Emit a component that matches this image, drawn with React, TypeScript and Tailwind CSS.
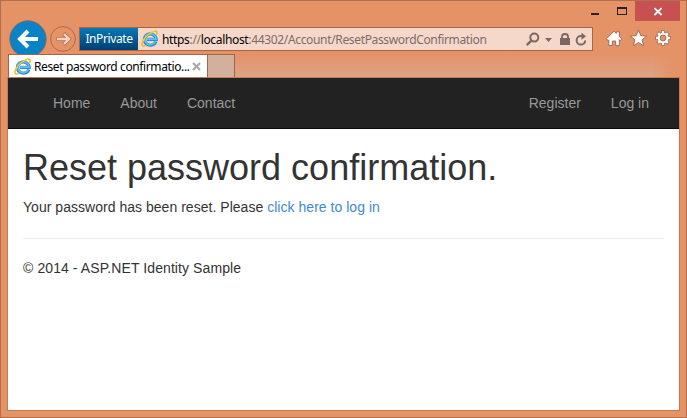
function IELogo() {
  return (
    <svg className="block shrink-0" width="18" height="18" viewBox="0 0 18 18" fill="none">
      <path d="M14.9 11.4A5.9 5.6 0 1 1 15.2 9.3H5.8" stroke="#2b8fce" strokeWidth="3.2" />
      <path d="M14.5 11.4A5.7 5.4 0 1 1 15 9.1H5.8" stroke="#62c0ee" strokeWidth="1.6" />
      <path d="M15.3 4.9C17 2 15.9 .8 13.6 1.3C9 2.2 2.6 7.8 1.2 12.6C.3 15.8 1.8 16.9 4.8 15.3" stroke="#f1b51c" strokeWidth="1.5" />
      <path d="M13.7 1.4C9.1 2.4 2.9 8 1.5 12.6" stroke="#ffd94a" strokeWidth=".7" />
    </svg>
  );
}

function TitleBar() {
  return (
    <div className="flex h-5 shrink-0 justify-end pr-[6px]">
      <svg className="block" width="49" height="20" shapeRendering="crispEdges">
        <rect x="5" y="12" width="8" height="2" fill="#252229" />
        <path d="M31 6H41V14H31ZM32 8V13H40V8Z" fill="#252229" fillRule="evenodd" />
      </svg>
      <div className="h-5 w-[45px] bg-[#c75050]">
        <svg className="block" width="45" height="20">
          <path d="M19.4 7.2L26.6 14M26.6 7.2L19.4 14" stroke="#fff" strokeWidth="1.8" />
        </svg>
      </div>
    </div>
  );
}

function NavigationRow() {
  return (
    <div className="flex h-[33px] shrink-0 pl-2">
      <svg className="-mt-px block shrink-0" width="70" height="38" viewBox="9 20 70 38" fill="none">
        <circle cx="28" cy="39" r="18.2" fill="#0883c5" stroke="#8d6858" />
        <path d="M38 39H20M28 31L20 39L28 47" stroke="#fff" strokeWidth="4" />
        <circle cx="63" cy="39" r="12.4" stroke="#b06b48" />
        <path d="M56.5 39H68M63.5 33.5L69 39L63.5 44.5" stroke="#b46f4e" strokeWidth="4" />
        <path d="M57 39H68.5M64 34L69 39L64 44" stroke="#f6d5c6" strokeWidth="2.4" />
      </svg>
      <div className="mt-[6px] flex h-6 w-[514px] shrink-0 border border-[#a46548] bg-[#f6d8cb] text-[12px] leading-[22px]">
        <div className="w-[58px] bg-linear-to-b from-[#0879b8] to-[#003f70] text-center tracking-[-0.4px] text-white">InPrivate</div>
        <div className="ml-[3px] mt-[2px] w-[18px]"><IELogo /></div>
        <div className="ml-[3px] mt-px w-[362px] whitespace-nowrap tracking-[-0.34px] text-[#7c6c65]">
          <span className="text-black">https</span>://<span className="text-black">localhost</span>:44302/Account/ResetPasswordConfirmation
        </div>
        <svg className="block shrink-0" width="66" height="22" viewBox="524 28 66 22" fill="none">
          <circle cx="534.3" cy="37.6" r="4" stroke="#7c6861" strokeWidth="2" />
          <path d="M531.3 40.7L526.8 45.2" stroke="#7c6861" strokeWidth="2.4" />
          <path d="M545 38H552L548.5 42Z" fill="#7c6861" />
          <path d="M560 38H570V45H560Z" fill="#7c6861" />
          <path d="M562 38.5V36.5Q562 34 565 34T568 36.5V38.5" stroke="#7c6861" strokeWidth="1.8" />
          <path d="M583 36H581A4.3 4.3 0 1 0 585.2 40.5" stroke="#7c6861" strokeWidth="2" />
          <path d="M581.5 32.7L586 36.2L581.5 39.7Z" fill="#7c6861" />
        </svg>
      </div>
      <svg className="mt-[6px] block shrink-0" width="84" height="24" viewBox="593 27 84 24">
        <path d="M606.6 38.7L614 31.2L616.3 33.4V31.8H619.4V36.5L621.8 39L620.2 40.7L619.3 39.8V45.6H615.7V41H612.4V45.6H608.8V39.8L608 40.6Z" fill="#fff" stroke="#94664f" strokeWidth=".9" />
        <path d="M638.5 30.2L640.8 35.7L646.7 36.1L642.1 39.8L643.6 45.7L638.5 42.5L633.4 45.7L634.9 39.8L630.3 36.1L636.2 35.7Z" fill="#fff" stroke="#94664f" strokeWidth=".9" />
        <path d="M663 30.4V45.6M655.4 38H670.6M657.6 32.6L668.4 43.4M657.6 43.4L668.4 32.6" stroke="#94664f" strokeWidth="3.8" />
        <circle cx="663" cy="38" r="5.9" fill="#94664f" />
        <path d="M663 31V45M656 38H670M658.1 33.1L667.9 42.9M658.1 42.9L667.9 33.1" stroke="#fff" strokeWidth="2.4" />
        <circle cx="663" cy="38" r="5.3" fill="#fff" />
        <circle cx="663" cy="38" r="2.9" fill="#e59267" stroke="#94664f" strokeWidth=".9" />
      </svg>
    </div>
  );
}

function TabRow() {
  return (
    <div className="z-10 flex h-[23px] shrink-0 pl-[7px]">
      <div className="flex w-[200px] border border-b-0 border-[#a46548] bg-white pl-[5px] text-[12px] leading-[22px] text-black">
        <div className="mt-[3px] w-[18px]"><IELogo /></div>
        <span className="ml-[2px] mt-px w-[158px] whitespace-nowrap tracking-[-0.38px]">Reset password confirmatio...</span>
        <svg className="mt-[7px] block shrink-0" width="9" height="9"><path d="M1 1L8 8M8 1L1 8" stroke="#aaa" strokeWidth="2.3" /></svg>
      </div>
      <div className="w-[27px] border border-b-0 border-l-0 border-[#a46548] bg-[#d3b09e]" />
      <div className="mr-3 flex-1 bg-linear-to-b from-[#e59267] to-[#dba486] mask-r-from-95%" />
    </div>
  );
}

export default function App() {
  return (
    <div className="flex h-[418px] w-[687px] flex-col overflow-hidden border border-[#b1704d] bg-[#e59267] font-['Noto_Sans',sans-serif]">
      <TitleBar />
      <NavigationRow />
      <TabRow />
      <main className="z-10 mx-[6px] mb-[6px] flex-1 border border-[#c17a56] bg-white font-['Liberation_Sans',Arial,sans-serif] text-[14px] leading-5 text-[#333]">
        <nav className="flex h-[51px] justify-between border-b border-[#080808] bg-[#222] pl-[45px] pr-[30px] pt-[15px] text-[#999]">
          <div className="flex gap-[30px]"><a>Home</a><a>About</a><a>Contact</a></div>
          <div className="flex gap-[30px]"><a>Register</a><a>Log in</a></div>
        </nav>
        <section className="px-[15px]">
          <h1 className="pt-[19px] text-[36px] leading-[39px]">Reset password confirmation.</h1>
          <p className="mt-[10px] tracking-[0.03px]">Your password has been reset. Please <a className="text-[#428bca]">click here to log in</a></p>
          <hr className="mb-[19px] mt-[21px] border-[#eee]" />
          <p className="tracking-[0.09px]">© 2014 - ASP.NET Identity Sample</p>
        </section>
      </main>
    </div>
  );
}
